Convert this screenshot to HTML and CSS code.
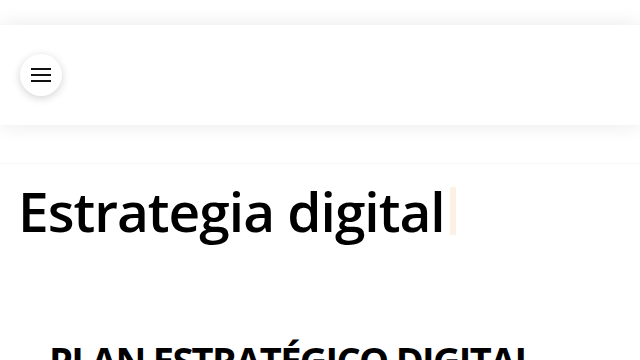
FILE: index.html
```html
<html lang="es">
<head>
    <meta charset="UTF-8">
    <meta name="viewport" content="width=device-width, initial-scale=1">
    <title>Estrategia digital</title>
    <link rel="stylesheet" href="styles.css">
</head>
<body>
    <header class="header">
        <button class="menu-btn" aria-label="Menú">
            <svg width="20" height="14" viewBox="0 0 20 14">
                <rect x="0" y="0" width="20" height="2" fill="#111"></rect>
                <rect x="0" y="6" width="20" height="2" fill="#111"></rect>
                <rect x="0" y="12" width="20" height="2" fill="#111"></rect>
            </svg>
        </button>
    </header>

    <div class="divider"></div>

    <main class="content">
        <h1 class="title">Estrategia digital<span class="cursor"></span></h1>
        <h2 class="subtitle">PLAN ESTRATÉGICO DIGITAL</h2>
    </main>
</body>
</html>
```

FILE: styles.css
```css
html, body {
    margin: 0;
    padding: 0;
    background: #ffffff;
    font-family: "Open Sans", Arial, sans-serif;
    color: #000000;
    overflow: hidden;
}

.header {
    margin-top: 25px;
    height: 100px;
    background: #ffffff;
    display: flex;
    align-items: center;
    padding-left: 20px;
    box-shadow: 0 0 20px rgba(0, 0, 0, 0.09);
    position: relative;
}

.menu-btn {
    width: 42px;
    height: 42px;
    border-radius: 50%;
    border: none;
    background: #ffffff;
    box-shadow: 0 2px 8px rgba(0, 0, 0, 0.18);
    display: flex;
    align-items: center;
    justify-content: center;
    padding: 0;
    cursor: pointer;
}

.divider {
    margin-top: 38px;
    height: 1px;
    background: #f7f7f7;
}

.content {
    padding-left: 18px;
}

.title {
    margin: 14px 0 0;
    font-size: 55px;
    font-weight: 600;
    line-height: 1.2;
    letter-spacing: -1px;
    display: flex;
    align-items: center;
}

.cursor {
    display: inline-block;
    width: 6px;
    height: 48px;
    margin-left: 5px;
    background: #fdf0e4;
}

.subtitle {
    margin: 94px 0 0 31px;
    font-size: 38px;
    font-weight: 700;
    letter-spacing: -1.7px;
    line-height: 1.2;
    white-space: nowrap;
}
```
